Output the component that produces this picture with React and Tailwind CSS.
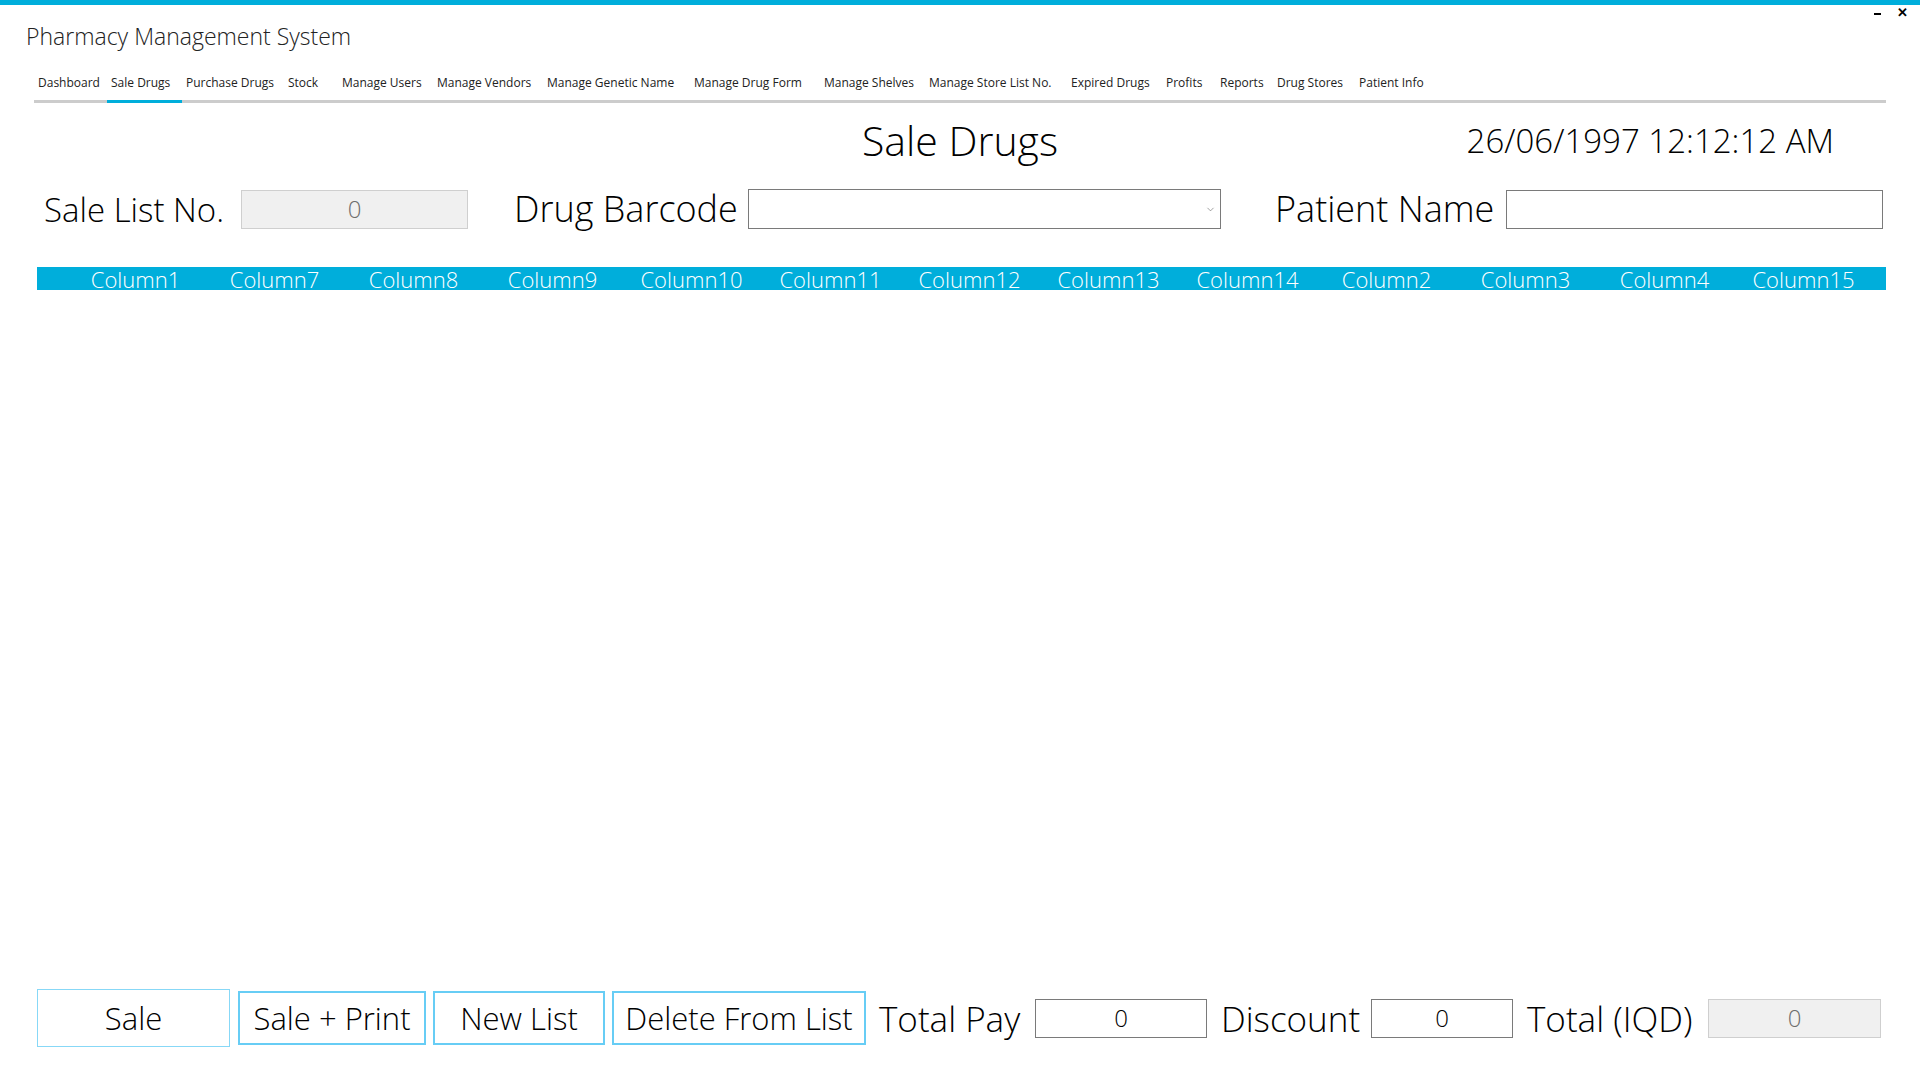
import React from 'react';
import { ChevronDown } from 'lucide-react';

const tabs = [
  { label: 'Dashboard', w: 'w-[73px]' },
  { label: 'Sale Drugs', w: 'w-[75px]', active: true },
  { label: 'Purchase Drugs', w: 'w-[102px]' },
  { label: 'Stock', w: 'w-[54px]' },
  { label: 'Manage Users', w: 'w-[95px]' },
  { label: 'Manage Vendors', w: 'w-[110px]' },
  { label: 'Manage Genetic Name', w: 'w-[147px]' },
  { label: 'Manage Drug Form', w: 'w-[130px]' },
  { label: 'Manage Shelves', w: 'w-[105px]' },
  { label: 'Manage Store List No.', w: 'w-[142px]' },
  { label: 'Expired Drugs', w: 'w-[95px]' },
  { label: 'Profits', w: 'w-[54px]' },
  { label: 'Reports', w: 'w-[57px]' },
  { label: 'Drug Stores', w: 'w-[82px]' },
  { label: 'Patient Info', w: 'w-[75px]' },
];

const columns = [
  'Column1', 'Column7', 'Column8', 'Column9', 'Column10', 'Column11', 'Column12',
  'Column13', 'Column14', 'Column2', 'Column3', 'Column4', 'Column15',
];

const gothic = "font-['Open_Sans','Noto_Sans',sans-serif] font-light";
const segoe = "font-['Open_Sans','Noto_Sans',sans-serif]";

function App() {
  return (
    <div className="relative flex h-screen w-[1920px] flex-col overflow-hidden bg-white text-black">
      <div className="h-[5px] bg-[#00aedb]" />

      {/* window buttons */}
      <div className={`absolute right-[12px] top-[6px] flex items-center gap-[16px] text-[13px] ${segoe}`}>
        <span className="mt-[2px] block h-[2px] w-[7px] bg-black" />
        <span className="font-bold leading-none">✕</span>
      </div>

      <div className={`h-[65px] pl-[26px] pt-[16px] text-[23px] font-light leading-[30px] text-[#222] ${segoe}`}>
        Pharmacy Management System
      </div>

      <div className="mx-[34px] flex h-[33px] border-b-[3px] border-[#cccccc]">
        {tabs.map((t) => (
          <div
            key={t.label}
            className={`${t.w} h-[33px] shrink-0 whitespace-nowrap pl-[4px] pt-[4px] text-[12px] leading-[18px] text-[#222] ${segoe} ${
              t.active ? 'border-b-[3px] border-[#00aedb]' : ''
            }`}
          >
            {t.label}
          </div>
        ))}
      </div>

      <div className={`mx-[34px] grid h-[74px] grid-cols-[1fr_auto_1fr] items-center ${gothic}`}>
        <div />
        <div className="text-[41px] leading-none">Sale Drugs</div>
        <div className="justify-self-end whitespace-nowrap pr-[52px] text-[33px] leading-none">26/06/1997 12:12:12 AM</div>
      </div>

      <div className={`mx-[34px] mt-[12px] flex h-[40px] items-center text-[35px] ${gothic}`}>
        <div className="w-[207px] whitespace-nowrap pl-[10px] text-[33px] leading-none">Sale List No.</div>
        <div className="flex h-[39px] w-[227px] shrink-0 items-center justify-center border border-[#cfcfcf] bg-[#f0f0f0] text-[24px] text-[#6d6d6d]">
          0
        </div>
        <div className="ml-[46px] w-[234px] whitespace-nowrap text-[36px] leading-none">Drug Barcode</div>
        <div className="flex h-[40px] w-[473px] shrink-0 items-center justify-end border border-[#7a7a7a] bg-white pr-[4px]">
          <ChevronDown size={11} strokeWidth={1.2} className="text-[#555]" />
        </div>
        <div className="ml-[54px] w-[231px] whitespace-nowrap text-[36px] leading-none">Patient Name</div>
        <div className="h-[39px] w-[377px] shrink-0 border border-[#7a7a7a] bg-white" />
      </div>

      <div className="mx-[34px] mt-[38px] flex-1">
        <div className={`ml-[3px] flex h-[23px] items-center bg-[#00aedb] text-[22px] leading-none text-white ${gothic}`}>
          <div className="w-[29px] shrink-0" />
          {columns.map((c) => (
            <div key={c} className="w-[139px] shrink-0 text-center">
              {c}
            </div>
          ))}
        </div>
      </div>

      <div className={`mb-[33px] ml-[37px] flex h-[58px] items-center text-[35px] ${gothic}`}>
        <button className="h-[58px] w-[193px] shrink-0 whitespace-nowrap border border-[#87d8f7] bg-white p-0 text-[31px] leading-none">Sale</button>
        <button className="ml-[8px] h-[54px] w-[188px] shrink-0 whitespace-nowrap border-2 border-[#67cdf5] bg-white p-0 text-[31px] leading-none">Sale + Print</button>
        <button className="ml-[7px] h-[54px] w-[172px] shrink-0 whitespace-nowrap border-2 border-[#67cdf5] bg-white p-0 text-[31px] leading-none">New List</button>
        <button className="ml-[7px] h-[54px] w-[254px] shrink-0 whitespace-nowrap border-2 border-[#67cdf5] bg-white p-0 text-[31px] leading-none">Delete From List</button>
        <div className="ml-[13px] w-[156px] whitespace-nowrap leading-none">Total Pay</div>
        <div className="flex h-[39px] w-[172px] shrink-0 items-center justify-center border border-[#7a7a7a] text-[24px]">0</div>
        <div className="ml-[14px] w-[150px] whitespace-nowrap leading-none">Discount</div>
        <div className="flex h-[39px] w-[142px] shrink-0 items-center justify-center border border-[#7a7a7a] text-[24px]">0</div>
        <div className="ml-[14px] w-[181px] whitespace-nowrap leading-none">Total (IQD)</div>
        <div className="flex h-[39px] w-[173px] shrink-0 items-center justify-center border border-[#cfcfcf] bg-[#f0f0f0] text-[24px] text-[#6d6d6d]">
          0
        </div>
      </div>
    </div>
  );
}

export default App;
